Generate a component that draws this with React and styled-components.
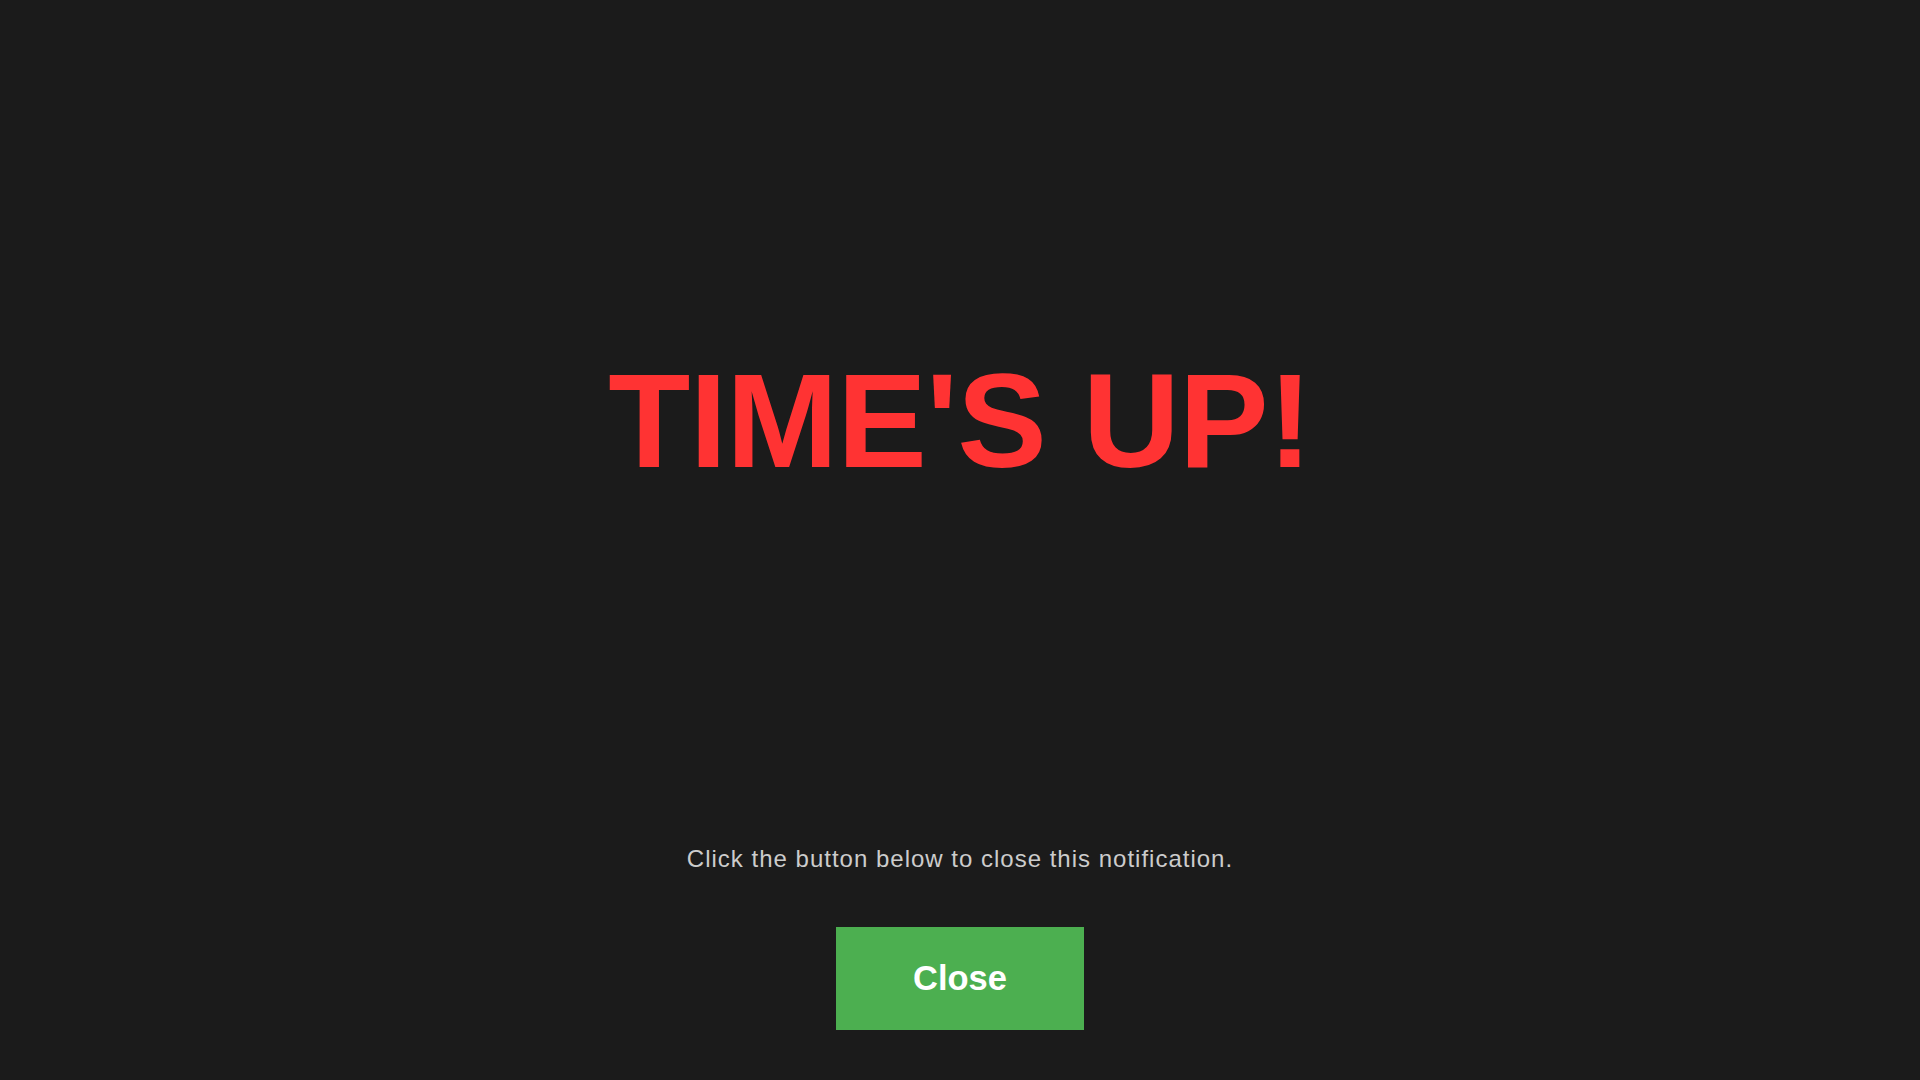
import React from 'react';
import styled, { createGlobalStyle } from 'styled-components';

const GlobalStyle = createGlobalStyle`
  html, body {
    margin: 0;
    padding: 0;
    background-color: #1b1b1b;
    font-family: "Liberation Sans", Arial, sans-serif;
  }
`;

const Screen = styled.div`
  display: flex;
  flex-direction: column;
  align-items: center;
  height: 100vh;
  padding-top: 343px;
  box-sizing: border-box;
  background-color: #1b1b1b;
`;

const Title = styled.h1`
  margin: 0;
  font-size: 134.4px;
  font-weight: 700;
  letter-spacing: -0.8px;
  color: #ff3333;
  line-height: normal;
`;

const Message = styled.p`
  margin: 348px 0 0;
  font-size: 24px;
  letter-spacing: 1px;
  color: #cccccc;
  line-height: normal;
`;

const CloseButton = styled.button`
  margin-top: 54px;
  padding: 32px 77px;
  border: none;
  border-radius: 0;
  background-color: #4caf50;
  color: #ffffff;
  font-family: inherit;
  font-size: 34.5px;
  font-weight: 700;
  line-height: normal;
  cursor: pointer;
`;

export default function App() {
  return (
    <>
      <GlobalStyle />
      <Screen>
        <Title>TIME'S UP!</Title>
        <Message>Click the button below to close this notification.</Message>
        <CloseButton>Close</CloseButton>
      </Screen>
    </>
  );
}
